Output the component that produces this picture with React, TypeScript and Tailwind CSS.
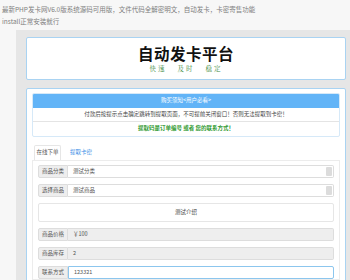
const cjk = "font-['Noto_Sans_CJK_SC','Liberation_Sans',sans-serif]";

function Addon({ label, children, tone = "white", select = false, focus = false }: { label: string; children: React.ReactNode; tone?: "white" | "gray"; select?: boolean; focus?: boolean }) {
	return (
		<div className="flex h-[13px] rounded-[2px] text-[5.5px] leading-none text-[#555]">
			<div className="flex w-[30px] shrink-0 items-center justify-center rounded-l-[2px] border border-[#ddd] bg-[#eeeeee]">{label}</div>
			<div
				className={`flex flex-1 items-center rounded-r-[2px] border pl-[5px] ${
					focus ? "border-[#8cc6ee] bg-white" : tone === "gray" ? "border-l-0 border-[#ddd] bg-[#eeeeee]" : "border-l-0 border-[#ddd] bg-white"
				}`}
			>
				<span className="flex-1">{children}</span>
				{select && <span className="mr-[1px] h-[9px] w-[6px] rounded-[1px] bg-[#dcdcdc]" />}
			</div>
		</div>
	);
}

export default function App() {
	return (
		<div className={`h-[280px] w-[350px] overflow-hidden bg-[#f7f7f7] ${cjk}`}>
			{/* Post caption */}
			<div className="px-[2px] pt-[3px] text-[6.5px] leading-[12px] text-[#808080]">
				<p>最新PHP发卡网V6.0版系统源码可用版，文件代码全解密明文，自动发卡，卡密寄售功能</p>
				<p>install正常安装就行</p>
			</div>

			{/* Screenshot */}
			<div className="ml-[16px] mt-[3px] h-[260px] bg-[#e6e6e6] pl-[10px] pt-[7px] pr-[4px]">
				{/* Header */}
				<div className="flex h-[43px] flex-col items-center rounded-[2px] border border-[#a9d3f2] bg-white">
					<h1 className="mt-[7px] text-[15.5px] font-bold leading-[16px] tracking-[0.5px] text-[#111]">自动发卡平台</h1>
					<div className="mt-[4px] flex gap-[11px] font-['Noto_Serif_CJK_SC','Noto_Sans_CJK_SC',serif] text-[6.5px] leading-[7px] tracking-[2px] text-[#3c8a3c]">
						<span>快速</span>
						<span>及时</span>
						<span>稳定</span>
					</div>
				</div>

				{/* Main */}
				<div className="mt-[8px] h-[200px] rounded-[2px] border border-[#a9d3f2] bg-white px-[5px] pt-[4px]">
					{/* Notice */}
					<div className="overflow-hidden rounded-[2px] border border-[#d6e9f8] text-center text-[5.5px] leading-none">
						<div className="flex h-[14px] items-center justify-center bg-[#62b4f7] text-white">购买须知&lt;用户必看&gt;</div>
						<div className="flex h-[14px] items-center justify-center border-b border-[#e4e4e4] text-[#444]">
							付款后按提示点击确定跳转到提取页面，不可提前关闭窗口！否则无法提取到卡密！
						</div>
						<div className="flex h-[14px] items-center justify-center font-bold text-[#2f9a2f]">提取码是订单编号 或者 您的联系方式！</div>
					</div>

					{/* Tabs */}
					<div className="mt-[8px] flex h-[15px] items-end pl-[2px] text-[5.5px] leading-none">
						<div className="flex h-[15px] w-[27px] items-center justify-center rounded-t-[2px] border border-b-0 border-[#e6e6e6] text-[#555]">在线下单</div>
						<div className="flex h-[15px] items-center px-[9px] text-[#3a8ee6]">提取卡密</div>
					</div>
					<div className="flex flex-col gap-[6px] border border-[#ececec] px-[5px] pt-[4px]">
						<Addon label="商品分类" select>测试分类</Addon>
						<Addon label="选择商品" select>测试商品</Addon>
						<div className="flex h-[19px] items-center justify-center rounded-[2px] border border-[#e6e6e6] text-[5.5px] leading-none text-[#444]">测试介绍</div>
						<Addon label="商品价格" tone="gray">￥100</Addon>
						<Addon label="商品库存" tone="gray">2</Addon>
						<Addon label="联系方式" focus>123321</Addon>
					</div>
				</div>
			</div>
		</div>
	);
}
